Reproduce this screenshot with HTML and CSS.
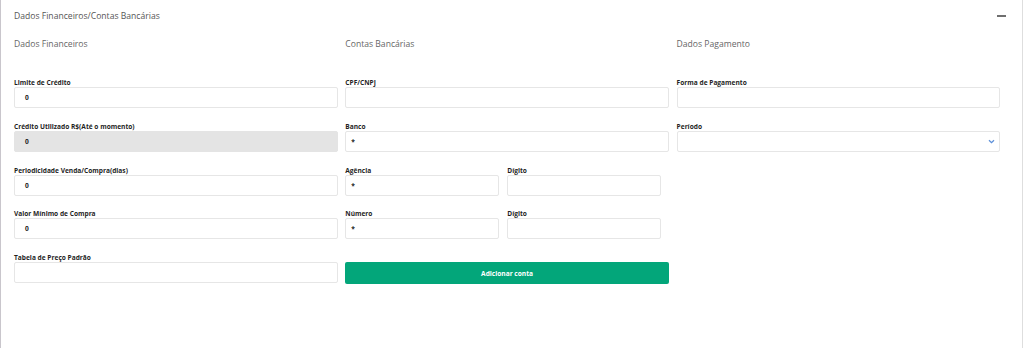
FILE: index.html
```html
<!DOCTYPE html>
<html lang="pt-BR">
<head>
<meta charset="utf-8">
<title>Dados Financeiros/Contas Bancárias</title>
<link rel="stylesheet" href="styles.css">
</head>
<body>
<div class="card">
  <div class="card-header">
    <span class="card-title">Dados Financeiros/Contas Bancárias</span>
    <span class="collapse-btn"></span>
  </div>
  <div class="card-body">
    <div class="col">
      <h3 class="section-title">Dados Financeiros</h3>
      <div class="group">
        <label class="lbl">Limite de Crédito</label>
        <div class="field pad10">0</div>
      </div>
      <div class="group">
        <label class="lbl">Crédito Utilizado R$(Até o momento)</label>
        <div class="field pad10 disabled">0</div>
      </div>
      <div class="group">
        <label class="lbl">Periodicidade Venda/Compra(dias)</label>
        <div class="field pad10">0</div>
      </div>
      <div class="group">
        <label class="lbl">Valor Mínimo de Compra</label>
        <div class="field pad10">0</div>
      </div>
      <div class="group">
        <label class="lbl">Tabela de Preço Padrão</label>
        <div class="field pad10"></div>
      </div>
    </div>
    <div class="col">
      <h3 class="section-title">Contas Bancárias</h3>
      <div class="group">
        <label class="lbl">CPF/CNPJ</label>
        <div class="field"></div>
      </div>
      <div class="group">
        <label class="lbl">Banco</label>
        <div class="field">*</div>
      </div>
      <div class="split">
        <div class="group">
          <label class="lbl">Agência</label>
          <div class="field">*</div>
        </div>
        <div class="group">
          <label class="lbl">Dígito</label>
          <div class="field"></div>
        </div>
      </div>
      <div class="split">
        <div class="group">
          <label class="lbl">Número</label>
          <div class="field">*</div>
        </div>
        <div class="group">
          <label class="lbl">Dígito</label>
          <div class="field"></div>
        </div>
      </div>
      <div class="group btn-group">
        <button class="btn-add" type="button">Adicionar conta</button>
      </div>
    </div>
    <div class="col">
      <h3 class="section-title">Dados Pagamento</h3>
      <div class="group">
        <label class="lbl">Forma de Pagamento</label>
        <div class="field"></div>
      </div>
      <div class="group">
        <label class="lbl">Período</label>
        <div class="field select">
          <span></span>
          <svg class="chev" width="7" height="5" viewBox="0 0 7 5"><path d="M1 1.2 L3.5 3.6 L6 1.2" fill="none" stroke="#5b8fd9" stroke-width="1.3"/></svg>
        </div>
      </div>
    </div>
  </div>
</div>
</body>
</html>
```

FILE: styles.css
```css
html, body {
  margin: 0;
  padding: 0;
  background: #ffffff;
}
body {
  font-family: "Open Sans", "Liberation Sans", sans-serif;
  color: #333;
}
.card {
  width: 1023px;
  height: 348px;
  box-sizing: border-box;
  border-left: 1px solid #c9c6cc;
  border-right: 1px solid #dedede;
  background: #fff;
}
.card-header {
  height: 32px;
  padding: 0 16px 0 13px;
  display: flex;
  align-items: center;
  justify-content: space-between;
}
.card-title {
  font-size: 8.6px;
  color: #555;
  line-height: 12px;
}
.collapse-btn {
  width: 9px;
  height: 1.5px;
  background: #6f6f6f;
}
.card-body {
  padding: 0 0 0 13px;
  display: grid;
  grid-template-columns: 323.5px 323.5px 323px;
  column-gap: 7.8px;
  align-items: start;
}
.section-title {
  margin: 6px 0 28px;
  font-size: 8.6px;
  line-height: 12px;
  font-weight: normal;
  color: #666;
}
.group {
  margin-bottom: 13.75px;
}
.lbl {
  display: block;
  height: 9px;
  line-height: 9px;
  font-size: 6.6px;
  font-weight: 700;
  color: #1f1f1f;
  white-space: nowrap;
}
.field {
  height: 21px;
  box-sizing: border-box;
  border: 1px solid #e6e6e6;
  border-radius: 2px;
  background: #fff;
  padding: 0 5px;
  display: flex;
  align-items: center;
  font-size: 6.6px;
  font-weight: 700;
  color: #222;
}
.pad10 {
  padding-left: 10px;
}
.disabled {
  background: #e4e4e4;
  border-color: #e4e4e4;
}
.split {
  width: 316px;
  display: grid;
  grid-template-columns: 154px 154px;
  column-gap: 8px;
}
.btn-group {
  padding-top: 9px;
}
.btn-add {
  display: block;
  width: 100%;
  height: 22px;
  border: 0;
  border-radius: 2px;
  background: #03a67a;
  color: #fff;
  font-family: "Open Sans", "Liberation Sans", sans-serif;
  font-size: 6.6px;
  font-weight: 700;
  padding: 0;
}
.select {
  justify-content: space-between;
  padding-right: 4px;
}
.chev {
  display: block;
}
```
